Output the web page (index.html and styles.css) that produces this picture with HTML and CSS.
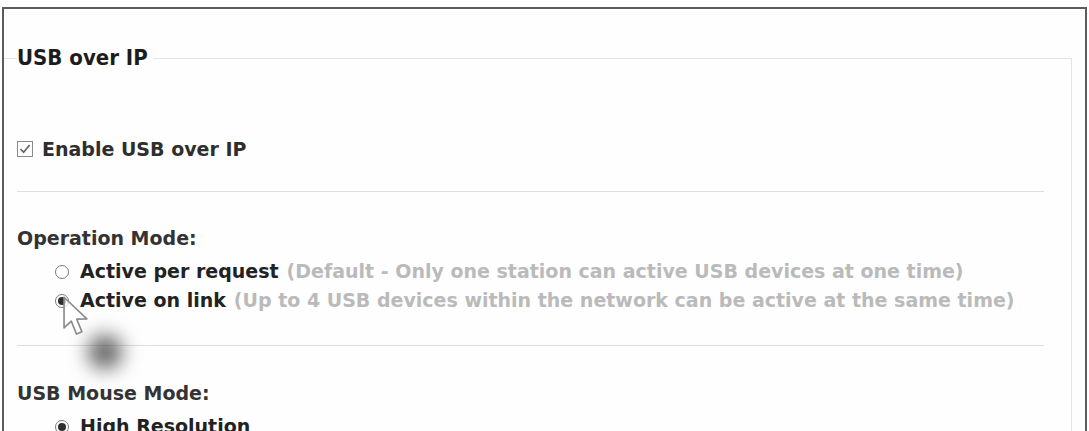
FILE: index.html
```html
<!DOCTYPE html>
<html lang="en">
<head>
<meta charset="utf-8">
<title>USB over IP</title>
<link rel="stylesheet" href="styles.css">
</head>
<body>
<div class="window">
  <fieldset class="panel">
    <legend class="panel-title">USB over IP</legend>

    <label class="check-row">
      <span class="checkbox">
        <svg viewBox="0 0 16 16" width="16" height="16">
          <rect x="0.5" y="0.5" width="15" height="15" fill="#fff" stroke="#8a8a8a"/>
          <path d="M3.4 8 L6.6 11.2 L12.6 4" fill="none" stroke="#666" stroke-width="1.7"/>
        </svg>
      </span>
      Enable USB over IP
    </label>

    <hr class="divider">

    <div class="group-title">Operation Mode:</div>
    <ul class="options">
      <li class="option">
        <span class="radio"></span>
        <span class="option-name">Active per request</span>
        <span class="hint">(Default - Only one station can active USB devices at one time)</span>
      </li>
      <li class="option">
        <span class="radio is-on"></span>
        <span class="option-name">Active on link</span>
        <span class="hint">(Up to 4 USB devices within the network can be active at the same time)</span>
      </li>
    </ul>

    <hr class="divider">

    <div class="group-title group-title-low">USB Mouse Mode:</div>
    <ul class="options">
      <li class="option">
        <span class="radio is-on"></span>
        <span class="option-name">High Resolution</span>
      </li>
    </ul>
  </fieldset>

  <div class="pointer">
    <span class="pointer-glow"></span>
    <svg class="pointer-arrow" viewBox="0 0 22 32" width="30" height="44">
      <path d="M1.5 1.5 L1.5 24 L6.8 19 L10.6 28.5 L14.6 26.8 L10.8 17.6 L18.2 17.4 Z"
            fill="rgba(255,255,255,0.7)" stroke="#8a8a8a" stroke-width="1.2" stroke-linejoin="round"/>
    </svg>
  </div>
</div>
</body>
</html>
```

FILE: styles.css
```css
html, body {
  margin: 0;
  padding: 0;
  background: #ffffff;
  height: 431px;
  overflow: hidden;
}

body {
  font-family: "DejaVu Sans", Verdana, sans-serif;
  font-weight: bold;
  font-size: 19px;
  color: #2a2a2a;
}

.window {
  position: relative;
  margin: 7px 2px 0 2px;
  height: 440px;
  border: 2px solid #5c5c5c;
  border-bottom: 0;
  background: #fefefe;
}

.panel {
  margin: 36px 13px 0 0;
  padding: 0 27px 0 13px;
  border: 1px solid #e4e4e4;
  border-left: 0;
  border-bottom: 0;
  height: 400px;
  min-width: 0;
}

.panel-title {
  padding: 0 5px 0 0;
  font-family: "DejaVu Sans Condensed", "DejaVu Sans", sans-serif;
  font-size: 22px;
  line-height: 26px;
  color: #1c1c1c;
}

.check-row {
  display: flex;
  align-items: center;
  gap: 9px;
  margin-top: 66px;
  line-height: 24px;
  color: #2e2e2e;
}

.checkbox {
  display: flex;
  width: 16px;
  height: 16px;
}

.divider {
  margin: 30px 0 0 0;
  border: 0;
  border-top: 1px solid #dedede;
  height: 0;
}

.group-title {
  margin-top: 34px;
  line-height: 24px;
  color: #333333;
}

.group-title-low {
  margin-top: 35px;
}

.options {
  list-style: none;
  margin: 7px 0 0 0;
  padding: 0 0 0 38px;
}

.option {
  display: flex;
  align-items: center;
  line-height: 29px;
  white-space: nowrap;
}

.radio {
  flex: none;
  width: 12px;
  height: 12px;
  border: 1px solid #7a7a7a;
  border-radius: 50%;
  background: #fff;
  margin-right: 11px;
  position: relative;
}

.radio.is-on::after {
  content: "";
  position: absolute;
  left: 2px;
  top: 2px;
  width: 8px;
  height: 8px;
  border-radius: 50%;
  background: #2e2e2e;
}

.option-name {
  color: #222222;
}

.hint {
  margin-left: 8px;
  color: #bababa;
}

/* mouse pointer hovering the second option, with its soft click halo */
.pointer {
  position: absolute;
  left: 58px;
  top: 286px;
  width: 70px;
  height: 90px;
  pointer-events: none;
}

.pointer-glow {
  position: absolute;
  left: 26px;
  top: 40px;
  width: 34px;
  height: 34px;
  border-radius: 50%;
  background: rgba(55, 55, 55, 0.8);
  filter: blur(10px);
}

.pointer-arrow {
  position: absolute;
  left: 0;
  top: 0;
}
```
